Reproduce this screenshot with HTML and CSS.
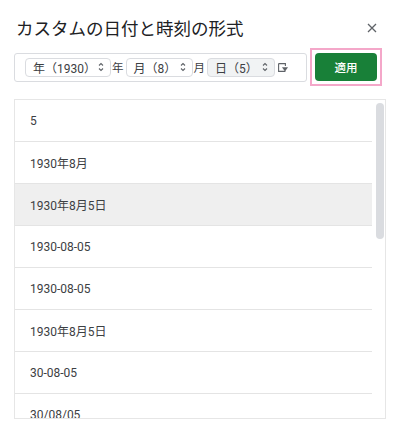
FILE: index.html
```html
<!DOCTYPE html>
<html lang="ja">
<head>
<meta charset="utf-8">
<title>カスタムの日付と時刻の形式</title>
<link rel="stylesheet" href="styles.css">
</head>
<body>
<div class="dialog">
  <div class="header">
    <h1 class="title">カスタムの日付と時刻の形式</h1>
    <svg class="close" width="10" height="10" viewBox="0 0 10 10"><path d="M1 1L9 9M9 1L1 9" stroke="#5f6368" stroke-width="1.3" fill="none"/></svg>
  </div>
  <div class="controls">
    <div class="format-box">
      <span class="chip chip-year">年（1930）<svg class="stepper" width="6" height="10" viewBox="0 0 6 10"><path d="M1 3.5L3 1.5L5 3.5M1 6.5L3 8.5L5 6.5" stroke="#5f6368" stroke-width="1.1" fill="none"/></svg></span>
      <span class="sep">年</span>
      <span class="chip chip-month">月（8）<svg class="stepper" width="6" height="10" viewBox="0 0 6 10"><path d="M1 3.5L3 1.5L5 3.5M1 6.5L3 8.5L5 6.5" stroke="#5f6368" stroke-width="1.1" fill="none"/></svg></span>
      <span class="sep">月</span>
      <span class="chip chip-day active">日（5）<svg class="stepper" width="6" height="10" viewBox="0 0 6 10"><path d="M1 3.5L3 1.5L5 3.5M1 6.5L3 8.5L5 6.5" stroke="#5f6368" stroke-width="1.1" fill="none"/></svg></span>
      <svg class="add-icon" width="10" height="9" viewBox="0 0 10 9"><path d="M0.6 0.6H7.4V3M7.4 8.4H0.6V0.6" stroke="#5f6368" stroke-width="1.1" fill="none"/><path d="M4 4.2H10L7 8.4Z" fill="#5f6368"/></svg>
    </div>
    <div class="apply-wrap">
      <button class="apply">適用</button>
    </div>
  </div>
  <div class="list">
    <div class="rows">
      <div class="row">5</div>
      <div class="row">1930年8月</div>
      <div class="row selected">1930年8月5日</div>
      <div class="row">1930-08-05</div>
      <div class="row">1930-08-05</div>
      <div class="row">1930年8月5日</div>
      <div class="row">30-08-05</div>
      <div class="row">30/08/05</div>
    </div>
    <div class="scroll-lane"><div class="thumb"></div></div>
  </div>
</div>
</body>
</html>
```
FILE: styles.css
```css
html, body {
  margin: 0;
  padding: 0;
  background: #ffffff;
}
body {
  font-family: Roboto, "Noto Sans CJK JP", sans-serif;
  color: #3c4043;
}
.dialog {
  width: 400px;
  height: 425px;
  padding: 0 14px;
  box-sizing: border-box;
  overflow: hidden;
}
.header {
  display: flex;
  align-items: center;
  justify-content: space-between;
  height: 32px;
  margin-top: 12px;
  padding-left: 2px;
  padding-right: 9px;
}
.title {
  margin: 0;
  font-family: "Noto Sans CJK JP", sans-serif;
  font-weight: 400;
  font-size: 17.5px;
  line-height: 24px;
  color: #202124;
  letter-spacing: 0;
}
.close {
  display: block;
}
.controls {
  display: flex;
  align-items: center;
  margin-top: 4px;
  height: 38px;
}
.format-box {
  width: 293px;
  height: 29px;
  box-sizing: border-box;
  border: 1px solid #dadce0;
  border-radius: 3px;
  display: flex;
  align-items: center;
  padding-left: 10px;
}
.chip {
  display: flex;
  align-items: center;
  justify-content: space-between;
  height: 19px;
  box-sizing: border-box;
  border: 1px solid #dadce0;
  border-radius: 4px;
  padding: 0 6px 0 7px;
  font-family: Roboto, "Noto Sans CJK JP", sans-serif;
  font-size: 12px;
  color: #3c4043;
  background: #ffffff;
}
.chip-year { width: 86px; }
.chip-month { width: 67px; }
.chip-day { width: 68px; }
.chip.active {
  background: #f1f3f4;
}
.stepper {
  display: block;
}
.sep {
  font-family: "Noto Sans CJK JP", sans-serif;
  font-size: 11.5px;
  color: #3c4043;
  margin: 0 2px 0 1px;
}
.add-icon {
  display: block;
  margin-left: 3px;
}
.apply-wrap {
  margin-left: 3px;
  width: 72px;
  height: 38px;
  box-sizing: border-box;
  border: 2px solid #f4a7c9;
  padding: 3px;
}
.apply {
  display: block;
  width: 62px;
  height: 28px;
  border: none;
  border-radius: 4px;
  background: #188038;
  color: #ffffff;
  font-family: "Noto Sans CJK JP", sans-serif;
  font-size: 11.5px;
  font-weight: 500;
  padding: 0;
}
.list {
  margin-top: 13px;
  width: 372px;
  height: 320px;
  box-sizing: border-box;
  border: 1px solid #e6e6e6;
  display: flex;
  overflow: hidden;
}
.rows {
  flex: 1;
}
.row {
  height: 41px;
  border-bottom: 1px solid #e4e4e4;
  display: flex;
  align-items: center;
  padding-left: 15px;
  font-size: 12px;
  color: #3c4043;
}
.row.selected {
  background: #efefef;
}
.scroll-lane {
  width: 13px;
  padding-top: 3px;
  display: flex;
  justify-content: center;
}
.thumb {
  width: 8px;
  height: 136px;
  border-radius: 4px;
  background: #dadce0;
  margin-left: 2px;
}
```
